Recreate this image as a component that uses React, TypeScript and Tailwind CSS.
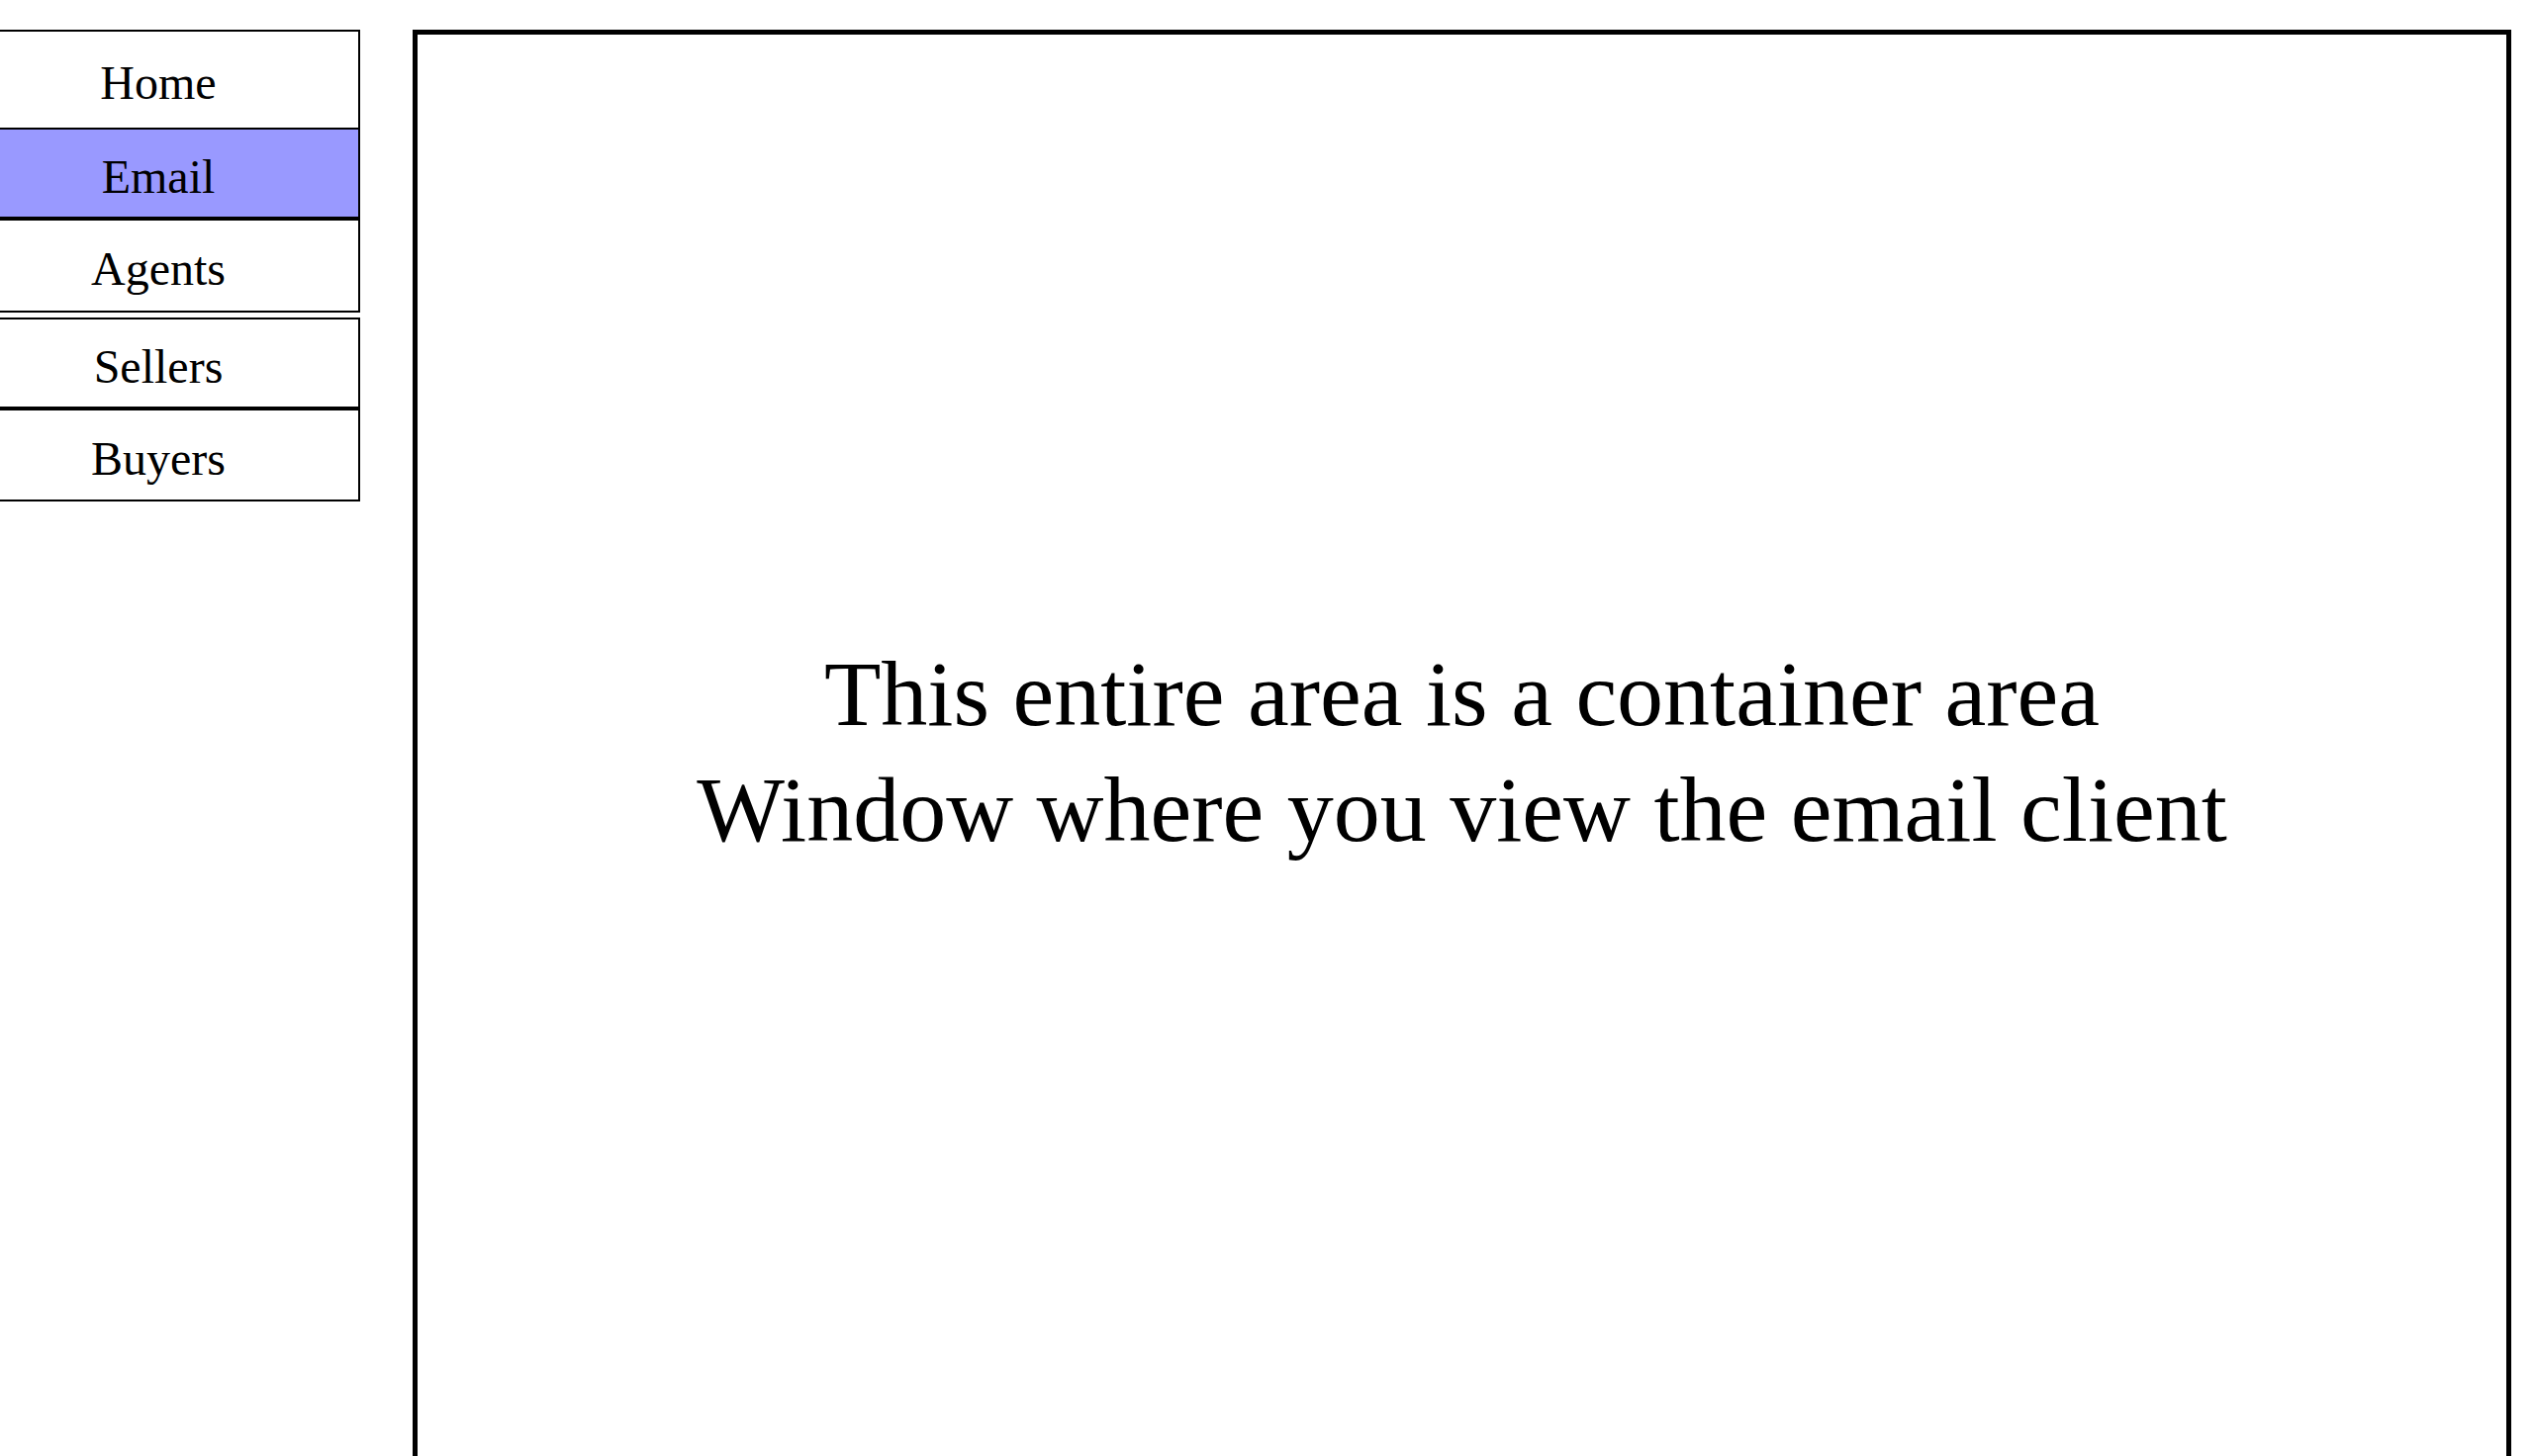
import React from "react";

const serif = { fontFamily: '"Liberation Serif", "Times New Roman", serif' };

function NavItem({
  label,
  active = false,
  extra = "",
}: {
  label: string;
  active?: boolean;
  extra?: string;
}) {
  return (
    <div
      className={`-ml-[44px] w-[408px] flex items-center justify-center border-2 border-black text-[48px] leading-none text-black ${
        active ? "bg-[#9999ff]" : "bg-white"
      } ${extra}`}
    >
      <span className="pt-[7px]">{label}</span>
    </div>
  );
}

export default function App() {
  return (
    <div className="min-h-screen bg-white flex items-start" style={serif}>
      <nav className="mt-[30px] flex flex-col w-[364px] shrink-0">
        <NavItem label="Home" extra="h-[101px]" />
        <NavItem label="Email" active extra="h-[92px] border-t-0 border-b-4" />
        <NavItem label="Agents" extra="h-[93px] border-t-0" />
        <NavItem label="Sellers" extra="h-[94px] mt-[5px] border-b-4" />
        <NavItem label="Buyers" extra="h-[92px] border-t-0" />
      </nav>
      <main className="mt-[30px] ml-[53px] w-[2121px] h-[1460px] shrink-0 border-[5px] border-black flex items-center justify-center">
        <div className="text-center text-[94px] leading-[117px] text-black">
          <div>This entire area is a container area</div>
          <div>Window where you view the email client</div>
        </div>
      </main>
    </div>
  );
}
